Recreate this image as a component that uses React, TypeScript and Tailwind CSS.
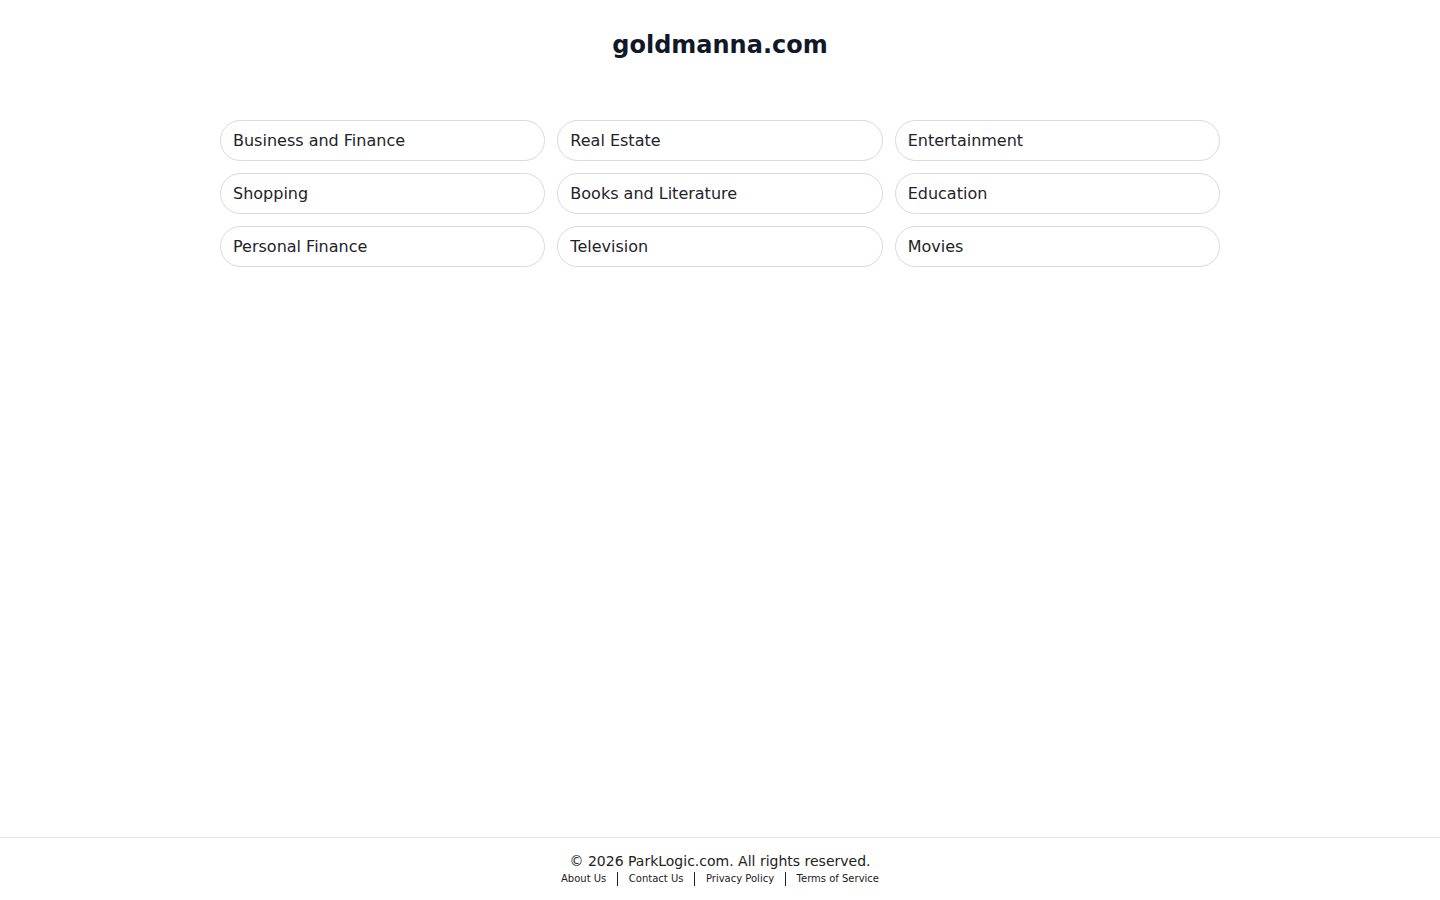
const categories = [
  "Business and Finance",
  "Real Estate",
  "Entertainment",
  "Shopping",
  "Books and Literature",
  "Education",
  "Personal Finance",
  "Television",
  "Movies",
];

const links = ["About Us", "Contact Us", "Privacy Policy", "Terms of Service"];

export default function App() {
  return (
    <div className="min-h-screen flex flex-col bg-white font-['DejaVu_Sans',sans-serif] text-[#1f2937]">
      <main className="flex-1">
        <h1 className="text-center text-[24px] font-bold text-[#111827] pt-[30px] leading-[30px]">goldmanna.com</h1>
        <div className="mx-auto w-[1000px] mt-[60px] grid grid-cols-3 gap-x-[12px] gap-y-[12px]">
          {categories.map((c) => (
            <a
              key={c}
              href="#"
              className="h-[41px] flex items-center px-[12px] rounded-full border border-[#d9d9de] text-[16px] text-[#1f2329]"
            >
              {c}
            </a>
          ))}
        </div>
      </main>
      <footer className="border-t border-[#e5e7eb] h-[63px] flex flex-col items-center pt-[14px]">
        <p className="text-[14px] leading-[18px] text-[#222]">© 2026 ParkLogic.com. All rights reserved.</p>
        <div className="flex items-center text-[10px] leading-[14px] text-[#222] mt-[2px]">
          {links.map((l, i) => (
            <div key={l} className="flex items-center">
              {i > 0 && <span className="mx-[10.5px] w-[1.5px] h-[14px] bg-[#222]" />}
              <a href="#">{l}</a>
            </div>
          ))}
        </div>
      </footer>
    </div>
  );
}
